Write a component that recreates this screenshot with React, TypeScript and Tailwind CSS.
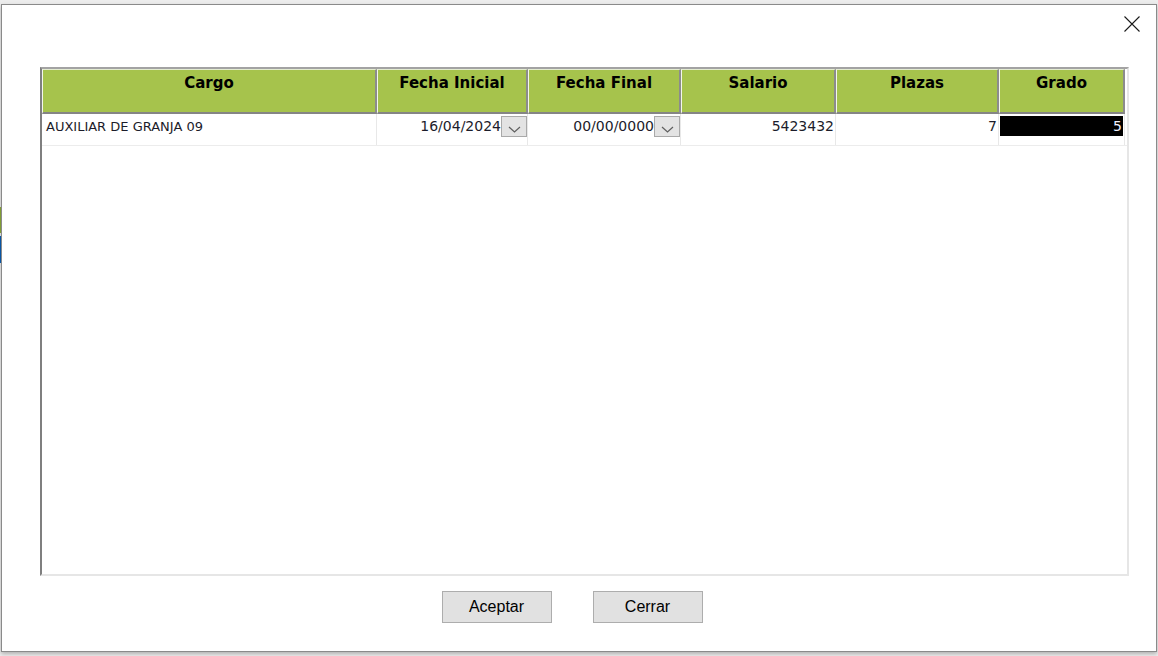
import React from 'react';

type Column = {
  title: string;
  width: string;
};

const columns: Column[] = [
  { title: 'Cargo', width: '335px' },
  { title: 'Fecha Inicial', width: '151px' },
  { title: 'Fecha Final', width: '153px' },
  { title: 'Salario', width: '155px' },
  { title: 'Plazas', width: '163px' },
  { title: 'Grado', width: '126px' },
];

const gridCols = 'grid grid-cols-[335px_151px_153px_155px_163px_126px]';

function DropButton() {
  return (
    <div className="mt-[2px] h-[21px] w-[26px] shrink-0 border border-[#a9a9a9] bg-[#e3e3e3] flex items-end justify-center pb-[3px]">
      <svg width="13" height="7" viewBox="0 0 13 7" fill="none">
        <path d="M1 1l5.5 5 5.5-5" stroke="#5f5f5f" strokeWidth="1.2" />
      </svg>
    </div>
  );
}

function DateCell({ value }: { value: string }) {
  return (
    <div className="flex justify-end border-r border-[#e8e8e8]">
      <span className="pt-[4px] text-[14px] leading-[16px] text-[#1c1c2a]">{value}</span>
      <DropButton />
    </div>
  );
}

export default function App() {
  return (
    <div
      className="w-[1158px] h-[656px] bg-[#ededed] flex overflow-hidden"
      style={{ fontFamily: '"DejaVu Sans", Verdana, sans-serif' }}
    >
      {/* bits of the window behind, peeking out on the left */}
      <div className="w-[1px] shrink-0 flex flex-col">
        <div className="h-[207px]" />
        <div className="h-[26px] bg-[#8fae3a]" />
        <div className="h-[3px]" />
        <div className="h-[27px] bg-[#0b5fb5]" />
      </div>

      <div className="mt-[4px] w-[1156px] h-[648px] shrink-0 border border-[#8a8a8a] bg-white shadow-[0_2px_4px_rgba(0,0,0,0.25)] flex flex-col">
        <div className="h-[62px] flex justify-end pt-[11px] pr-[16px]">
          <svg width="16" height="16" viewBox="0 0 16 16" fill="none">
            <path d="M0.5 0.5l15 15M15.5 0.5l-15 15" stroke="#1a1a1a" strokeWidth="1.1" />
          </svg>
        </div>

        {/* grid */}
        <div className="ml-[38px] w-[1089px] h-[509px] border-t-2 border-l-2 border-t-[#a3a3a3] border-l-[#7f7f7f] border-r-2 border-b-2 border-r-[#e6e6e6] border-b-[#e6e6e6] flex flex-col">
          <div className={`${gridCols} h-[45px]`}>
            {columns.map(col => (
              <div
                key={col.title}
                className="bg-[#a6c34c] border-t border-l border-t-[#e4ecd0] border-l-[#f4f7ec] border-r-2 border-r-[#8c8c8c] border-b-2 border-b-[#858585] text-center pt-[3px] text-[15px] leading-[20px] font-bold text-black"
              >
                {col.title}
              </div>
            ))}
          </div>

          <div className={`${gridCols} h-[32px] border-b border-[#ececec]`}>
            <div className="border-r border-[#e8e8e8] pl-[4px] pt-[5px] text-[13px] leading-[16px] text-[#1c1c2a]">
              AUXILIAR DE GRANJA 09
            </div>
            <DateCell value="16/04/2024" />
            <DateCell value="00/00/0000" />
            <div className="border-r border-[#e8e8e8] pt-[4px] pr-[1px] text-right text-[14px] leading-[16px] text-[#1c1c2a]">
              5423432
            </div>
            <div className="border-r border-[#e8e8e8] pt-[4px] pr-[1px] text-right text-[14px] leading-[16px] text-[#1c1c2a]">
              7
            </div>
            <div className="pl-[1px] pr-[1px] border-r border-[#e8e8e8]">
              <div className="mt-[2px] h-[20px] bg-black text-right pt-[2px] pr-[1px] text-[14px] leading-[16px] text-[#f2f2ff]">
                5
              </div>
            </div>
          </div>
        </div>

        {/* buttons */}
        <div
          className="mt-[15px] flex justify-center gap-[41px] pr-[14px]"
          style={{ fontFamily: '"Liberation Sans", Arial, sans-serif' }}
        >
          <button className="w-[110px] h-[32px] border border-[#adadad] bg-[#e1e1e1] text-[16px] text-black">
            Aceptar
          </button>
          <button className="w-[110px] h-[32px] border border-[#adadad] bg-[#e1e1e1] text-[16px] text-black">
            Cerrar
          </button>
        </div>
      </div>
    </div>
  );
}
